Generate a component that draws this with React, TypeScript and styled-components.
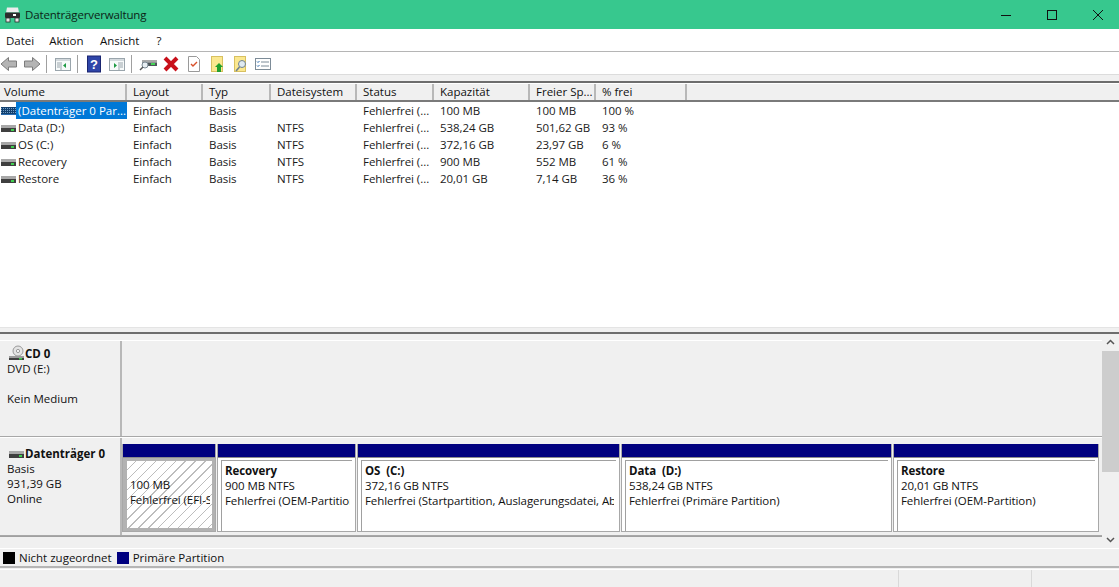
import React from "react";
import styled, { createGlobalStyle } from "styled-components";

const COLUMNS = "127px 76px 68px 86px 77px 96px 66px 91px 1fr";

const volumes = [
  { name: "(Datenträger 0 Par...", fs: "", cap: "100 MB", free: "100 MB", pct: "100 %", efi: true },
  { name: "Data (D:)", fs: "NTFS", cap: "538,24 GB", free: "501,62 GB", pct: "93 %" },
  { name: "OS (C:)", fs: "NTFS", cap: "372,16 GB", free: "23,97 GB", pct: "6 %" },
  { name: "Recovery", fs: "NTFS", cap: "900 MB", free: "552 MB", pct: "61 %" },
  { name: "Restore", fs: "NTFS", cap: "20,01 GB", free: "7,14 GB", pct: "36 %" },
];

const headers = ["Volume", "Layout", "Typ", "Dateisystem", "Status", "Kapazität", "Freier Sp...", "% frei"];

const menus = [
  { label: "Datei", after: 15 },
  { label: "Aktion", after: 16.5 },
  { label: "Ansicht", after: 17 },
  { label: "?", after: 0 },
];

const partitions = [
  { width: 92, size: "100 MB", status: "Fehlerfrei (EFI-Systempartition)", hatched: true },
  { width: 137, title: "Recovery", size: "900 MB NTFS", status: "Fehlerfrei (OEM-Partition)" },
  { width: 261, title: "OS  (C:)", size: "372,16 GB NTFS", status: "Fehlerfrei (Startpartition, Auslagerungsdatei, Absturzabbild, Primäre Partition)" },
  { width: 269, title: "Data  (D:)", size: "538,24 GB NTFS", status: "Fehlerfrei (Primäre Partition)" },
  { width: 204, title: "Restore", size: "20,01 GB NTFS", status: "Fehlerfrei (OEM-Partition)" },
];

const Global = createGlobalStyle`
  html, body { margin: 0; padding: 0; background: #f0f0f0; }
  body { font-family: "Open Sans", "Noto Sans", sans-serif; font-size: 11.5px; color: #1a1a1a; }
`;

const Win = styled.div`
  width: 1119px;
  height: 587px;
  display: flex;
  flex-direction: column;
  overflow: hidden;
`;

const TitleBar = styled.div`
  height: 29px;
  flex: none;
  background: #37c88e;
  display: flex;
  align-items: center;
  padding-left: 4px;
  font-size: 11.5px;
  letter-spacing: -0.15px;
  color: #0c1f17;
`;

const TitleIcon = styled.svg`
  width: 17px;
  height: 17px;
  margin-right: 4px;
  flex: none;
`;

const TitleText = styled.span`
  flex: 1;
`;

const WinButtons = styled.div`
  display: flex;
  margin-right: -2px;
`;

const WinButton = styled.div`
  width: 46px;
  height: 29px;
  display: flex;
  align-items: center;
  justify-content: center;
`;

const MenuBar = styled.div`
  height: 22px;
  flex: none;
  background: #fff;
  border-bottom: 1px solid #b5b5b5;
  display: flex;
  align-items: center;
  padding-left: 6px;
  color: #111;
`;

const MenuItem = styled.span<{ $after: number }>`
  margin-right: ${({ $after }) => $after}px;
`;

const ToolBar = styled.div`
  height: 21px;
  flex: none;
  background: #fff;
  padding-top: 1px;
  border-bottom: 1px solid #dcdcdc;
  display: flex;
  align-items: center;
`;

const ToolSep = styled.div`
  width: 1px;
  height: 18px;
  background: #a0a0a0;
  margin-right: 7px;
`;

const Tool = styled.svg`
  width: 18px;
  height: 18px;
  margin-right: 5px;
  flex: none;
`;

const TableGap = styled.div`
  height: 6px;
  flex: none;
  border-bottom: 2px solid #6d6d6d;
`;

const HeaderRow = styled.div`
  display: grid;
  flex: none;
  grid-template-columns: ${COLUMNS};
  background: #f0f0f0;
  border-top: 1px solid #fff;
  border-bottom: 2px solid #7a7a7a;
  box-sizing: border-box;
  height: 19px;
`;

const HeaderCell = styled.div`
  padding-left: 6px;
  line-height: 16px;
  border-right: 2px solid #b8b8b8;
  color: #111;
  white-space: nowrap;
  overflow: hidden;
  &:first-child { padding-left: 4px; }
  &:last-child { border-right: 0; }
`;

const TableBody = styled.div`
  height: 225px;
  flex: none;
  background: #fff;
  overflow: hidden;
`;

const Row = styled.div`
  display: grid;
  grid-template-columns: ${COLUMNS};
  height: 17px;
  line-height: 17px;
`;

const Cell = styled.div`
  padding-left: 6px;
  letter-spacing: -0.05px;
  white-space: nowrap;
  overflow: hidden;
`;

const NameCell = styled.div`
  display: flex;
  align-items: center;
  white-space: nowrap;
  overflow: hidden;
  padding-left: 1px;
`;

const NameText = styled.span<{ $selected?: boolean }>`
  flex: 1;
  padding-left: 2px;
  background: ${({ $selected }) => ($selected ? "#0078d7" : "transparent")};
  color: ${({ $selected }) => ($selected ? "#fff" : "inherit")};
`;

const Splitter = styled.div`
  height: 4px;
  flex: none;
  background: #f0f0f0;
  border-top: 1px solid #e4e4e4;
  border-bottom: 2px solid #6d6d6d;
`;

const LowerPane = styled.div`
  height: 214px;
  flex: none;
  display: flex;
  border-bottom: 1px solid #fff;
`;

const DiskArea = styled.div`
  flex: 1;
  display: flex;
  flex-direction: column;
  padding-top: 6px;
  margin-bottom: 11px;
  border-bottom: 1px solid #a0a0a0;
`;

const DiskRow = styled.div<{ $h: number }>`
  height: ${({ $h }) => $h}px;
  flex: none;
  display: flex;
  border-top: 1px solid #fff;
  border-bottom: 1px solid #a8a8a8;
  box-sizing: border-box;
`;

const DiskInfo = styled.div<{ $top: number }>`
  width: 122px;
  flex: none;
  padding: ${({ $top }) => $top}px 0 0 7px;
  box-sizing: border-box;
  border-right: 2px solid #b8b8b8;
  line-height: 15px;
  color: #111;
`;

const DiskName = styled.div`
  display: flex;
  align-items: center;
  gap: 1px;
  font-weight: 700;
  margin-left: 2px;
`;

const Spacer = styled.div`
  height: 15px;
`;

const Segments = styled.div`
  display: flex;
  gap: 1px;
  flex: 1;
  padding-top: 6px;
`;

const Segment = styled.div<{ $w: number }>`
  width: ${({ $w }) => $w + 2}px;
  height: 88px;
  box-sizing: border-box;
  flex: none;
  display: flex;
  flex-direction: column;
  border: 1px solid #a8a8a8;
  border-top: 0;
`;

const Band = styled.div`
  height: 13px;
  flex: none;
  background: #00007f;
  border-bottom: 1px solid #8c8c8c;
`;

const Box = styled.div<{ $hatched?: boolean }>`
  flex: 1;
  min-height: 0;
  box-sizing: border-box;
  background: #fff;
  padding: ${({ $hatched }) => ($hatched ? "0" : "2px 3px 0")};
  display: flex;
  color: #111;
  line-height: 15px;
`;

const BoxInner = styled.div<{ $hatched?: boolean }>`
  flex: 1;
  min-width: 0;
  box-sizing: border-box;
  ${({ $hatched }) =>
    $hatched
      ? `
    border: solid #b2b2b2;
    border-width: 3px 3px 3px 4px;
    padding: 16px 2px 0 3px;
    background: repeating-linear-gradient(135deg, #fff 0 6px, #bdbdbd 6px 7px);
  `
      : `
    border-top: 1px solid #a0a0a0;
    border-left: 1px solid #a0a0a0;
    padding: 2px 2px 0 3px;
  `}
`;

const BoxText = styled.div`
  white-space: pre;
  overflow: hidden;
  letter-spacing: -0.08px;
`;

const BoxTitle = styled.div`
  font-weight: 700;
`;

const ScrollBar = styled.div`
  width: 17px;
  background: #f0f0f0;
  display: flex;
  flex-direction: column;
  align-items: center;
  flex: none;
`;

const ScrollArrow = styled.svg`
  width: 17px;
  height: 17px;
  flex: none;
`;

const ScrollThumb = styled.div`
  width: 17px;
  height: 121px;
  background: #cdcdcd;
`;

const ScrollTrack = styled.div`
  flex: 1;
`;

const Legend = styled.div`
  height: 19px;
  flex: none;
  display: flex;
  align-items: center;
  padding-left: 3px;
  box-sizing: border-box;
  border-bottom: 2px solid #b5b5b5;
  color: #111;
`;

const Swatch = styled.div<{ $c: string }>`
  width: 12px;
  height: 12px;
  background: ${({ $c }) => $c};
  margin-right: 4px;
`;

const LegendText = styled.span`
  margin-right: 5px;
`;

const StatusBar = styled.div`
  flex: 1;
  margin-top: 1px;
  border-top: 1px solid #fff;
  display: grid;
  grid-template-columns: 899px 133px 1fr;
`;

const StatusCell = styled.div`
  border-right: 1px solid #d9d9d9;
  &:last-child { border-right: 0; }
`;

const RowIcon = styled.svg`
  width: 15px;
  height: 12px;
  flex: none;
`;

const CdIcon = styled.svg`
  width: 15px;
  height: 16px;
  flex: none;
`;

const Drive = () => (
  <RowIcon viewBox="0 0 15 12">
    <rect x="0" y="3" width="15" height="3" fill="#a8a8a8" />
    <rect x="0" y="6" width="15" height="4" fill="#3f3f3f" />
    <rect x="10" y="7" width="3" height="2" fill="#3fd04f" />
  </RowIcon>
);

const PartitionIcon = () => (
  <RowIcon viewBox="0 0 15 12">
    <rect x="0" y="2" width="15" height="8" fill="#12406f" />
    <path d="M0 3.500h15M0 5.500h15M0 7.500h15" stroke="#8fb9e0" strokeWidth="0.8" strokeDasharray="1 1" />
    <path d="M0 9.500h15" stroke="#2a6cb0" />
  </RowIcon>
);

const Cd = () => (
  <CdIcon viewBox="0 0 15 16">
    <circle cx="9" cy="6" r="5" fill="#e4e4e4" stroke="#9a9a9a" />
    <circle cx="9" cy="6" r="1.600" fill="#fff" stroke="#9a9a9a" />
    <rect x="0" y="11" width="15" height="2" fill="#9c9c9c" />
    <rect x="0" y="13" width="15" height="2" fill="#3f3f3f" />
    <rect x="10" y="13" width="3" height="1.500" fill="#3fd04f" />
  </CdIcon>
);

const Arrow = ({ flip }: { flip?: boolean }) => (
  <Tool viewBox="0 0 18 18">
    <path
      d={flip ? "M17 9 9.500 2.500V6H1.500v6h8v3.500z" : "M1 9l7.500-6.500V6h8v6h-8v3.500z"}
      fill="#b4b4b4"
      stroke="#7c7c7c"
    />
  </Tool>
);

const PanelIcon = ({ right }: { right?: boolean }) => (
  <Tool viewBox="0 0 18 18">
    <rect x="1.500" y="3.500" width="15" height="12" fill="#f7fafa" stroke="#9aa5ac" />
    <rect x="2" y="4" width="14" height="2" fill="#d3d9dd" />
    {right ? (
      <path d="M12 8h3M12 10h3M12 12h3M11 7v8" stroke="#9aa5ac" />
    ) : (
      <path d="M3 8h3M3 10h3M3 12h3M7 7v8" stroke="#9aa5ac" />
    )}
    <path d={right ? "M6 8v5l3-2.500z" : "M12 8v5l-3-2.500z"} fill="#1e9a44" />
  </Tool>
);

export default function App() {
  return (
    <Win>
      <Global />
      <TitleBar>
        <TitleIcon viewBox="0 0 17 17">
          <path d="M3 1.500h11l1 5H2z" fill="#ececec" />
          <rect x="1" y="6.500" width="15" height="5.500" rx="1" fill="#2c2c2c" />
          <rect x="9" y="8" width="3" height="2" fill="#fff" />
          <rect x="2" y="12" width="4" height="4" fill="#e6e6e6" stroke="#2c2c2c" strokeWidth="0.8" />
          <rect x="11" y="12" width="4" height="4" fill="#e6e6e6" stroke="#2c2c2c" strokeWidth="0.8" />
        </TitleIcon>
        <TitleText>Datenträgerverwaltung</TitleText>
        <WinButtons>
          <WinButton>
            <svg width="10" height="10"><path d="M0 5.500h10" stroke="#111" /></svg>
          </WinButton>
          <WinButton>
            <svg width="10" height="10"><rect x=".5" y=".5" width="9" height="9" fill="none" stroke="#111" /></svg>
          </WinButton>
          <WinButton>
            <svg width="10" height="10"><path d="M0 0l10 10M10 0 0 10" stroke="#111" /></svg>
          </WinButton>
        </WinButtons>
      </TitleBar>
      <MenuBar>
        {menus.map((m) => (
          <MenuItem key={m.label} $after={m.after}>{m.label}</MenuItem>
        ))}
      </MenuBar>
      <ToolBar>
        <Arrow />
        <Arrow flip />
        <ToolSep />
        <PanelIcon />
        <ToolSep />
        <Tool viewBox="0 0 18 18">
          <rect x="2.500" y="1" width="13" height="16" fill="#2f45a8" stroke="#1a2570" />
          <text x="9" y="14" fontSize="13" fontWeight="700" fill="#fff" textAnchor="middle" fontFamily="Liberation Sans">?</text>
        </Tool>
        <PanelIcon right />
        <ToolSep />
        <Tool viewBox="0 0 18 18">
          <rect x="3" y="5" width="15" height="2.500" fill="#a8a8a8" />
          <rect x="3" y="7.500" width="15" height="3.500" fill="#4c5458" />
          <rect x="12" y="8" width="4" height="2" fill="#43d454" />
          <circle cx="6" cy="10" r="3" fill="#e8eef2" stroke="#7b8a94" />
          <path d="M4 12 1 15" stroke="#555" strokeWidth="1.500" />
        </Tool>
        <Tool viewBox="0 0 18 18">
          <path d="M3 3l12 12M15 3 3 15" stroke="#c8101a" strokeWidth="4" />
        </Tool>
        <Tool viewBox="0 0 18 18">
          <path d="M3.500 1.500h8l3 3v12h-11z" fill="#fff" stroke="#9a9a9a" />
          <path d="M6 9l2 2 4-4" fill="none" stroke="#d8502a" strokeWidth="1.400" />
        </Tool>
        <Tool viewBox="0 0 18 18">
          <rect x="3.500" y="1.500" width="11" height="15" fill="#fbe88f" stroke="#d8c060" />
          <path d="M11 8l4 4h-2v5H9v-5H7z" fill="#22a02c" />
        </Tool>
        <Tool viewBox="0 0 18 18">
          <rect x="3.500" y="1.500" width="11" height="15" fill="#fbe88f" stroke="#d8c060" />
          <circle cx="11" cy="9" r="3.500" fill="#dfeaf2" stroke="#70828e" />
          <path d="M8.500 12 5 16" stroke="#70828e" strokeWidth="1.600" />
        </Tool>
        <Tool viewBox="0 0 18 18">
          <rect x="1.500" y="3.500" width="15" height="11" fill="#fff" stroke="#7d8c98" />
          <path d="M3 6.500l1 1 1.500-1.500M3 10.500l1 1 1.500-1.500" fill="none" stroke="#2b6cb0" />
          <path d="M7 7h8M7 11h8" stroke="#7d8c98" />
        </Tool>
      </ToolBar>
      <TableGap />
      <HeaderRow>
        {headers.map((h) => (
          <HeaderCell key={h}>{h}</HeaderCell>
        ))}
        <HeaderCell />
      </HeaderRow>
      <TableBody>
        {volumes.map((v) => (
          <Row key={v.name}>
            <NameCell>
              {v.efi ? <PartitionIcon /> : <Drive />}
              <NameText $selected={v.efi}>{v.name}</NameText>
            </NameCell>
            <Cell>Einfach</Cell>
            <Cell>Basis</Cell>
            <Cell>{v.fs}</Cell>
            <Cell>Fehlerfrei (...</Cell>
            <Cell>{v.cap}</Cell>
            <Cell>{v.free}</Cell>
            <Cell>{v.pct}</Cell>
          </Row>
        ))}
      </TableBody>
      <Splitter />
      <LowerPane>
        <DiskArea>
          <DiskRow $h={97}>
            <DiskInfo $top={4}>
              <DiskName><Cd />CD 0</DiskName>
              DVD (E:)
              <Spacer />
              Kein Medium
            </DiskInfo>
          </DiskRow>
          <DiskRow $h={99}>
            <DiskInfo $top={8}>
              <DiskName><Drive />Datenträger 0</DiskName>
              Basis
              <br />
              931,39 GB
              <br />
              Online
            </DiskInfo>
            <Segments>
              {partitions.map((p) => (
                <Segment key={p.status + p.width} $w={p.width}>
                  <Band />
                  <Box $hatched={p.hatched}>
                    <BoxInner $hatched={p.hatched}>
                      <BoxText>
                        {p.title && <BoxTitle>{p.title}</BoxTitle>}
                        {p.size}
                        {"\n"}
                        {p.status}
                      </BoxText>
                    </BoxInner>
                  </Box>
                </Segment>
              ))}
            </Segments>
          </DiskRow>
        </DiskArea>
        <ScrollBar>
          <ScrollArrow viewBox="0 0 17 17"><path d="M5 10l3.500-3.500L12 10" fill="none" stroke="#555" strokeWidth="1.500" /></ScrollArrow>
          <ScrollThumb />
          <ScrollTrack />
          <ScrollArrow viewBox="0 0 17 17"><path d="M5 7l3.500 3.500L12 7" fill="none" stroke="#555" strokeWidth="1.500" /></ScrollArrow>
        </ScrollBar>
      </LowerPane>
      <Legend>
        <Swatch $c="#000" />
        <LegendText>Nicht zugeordnet</LegendText>
        <Swatch $c="#00007f" />
        <LegendText>Primäre Partition</LegendText>
      </Legend>
      <StatusBar>
        <StatusCell />
        <StatusCell />
        <StatusCell />
      </StatusBar>
    </Win>
  );
}
